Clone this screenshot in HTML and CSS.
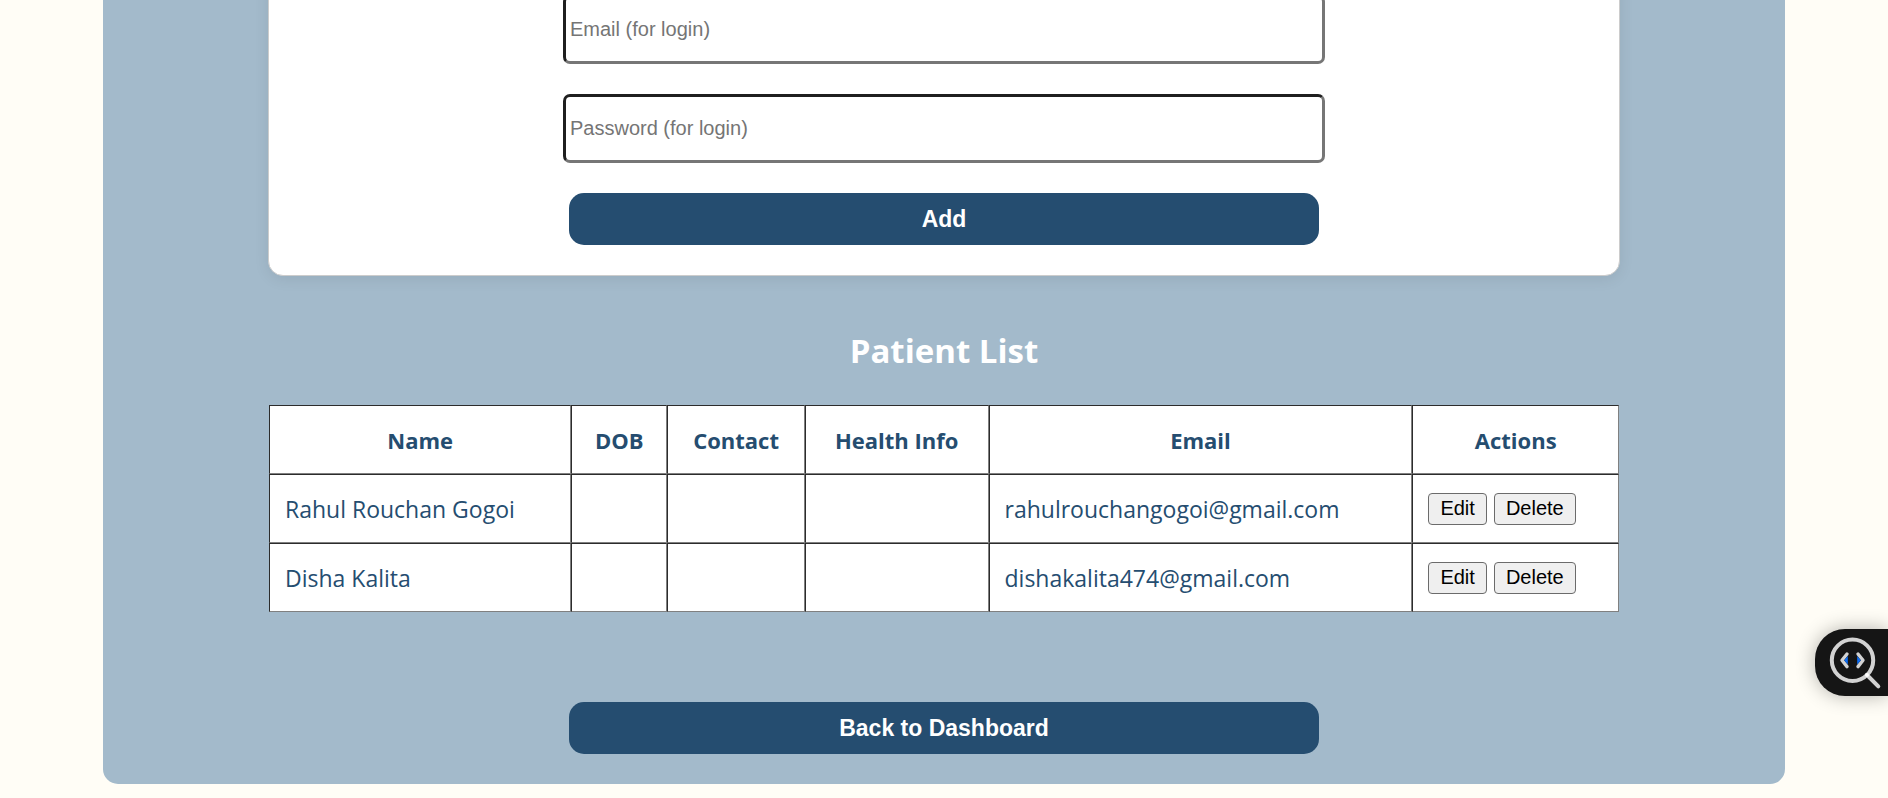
FILE: index.html
```html
<!DOCTYPE html>
<html lang="en">
<head>
<meta charset="utf-8">
<title>Patient List</title>
<link rel="stylesheet" href="styles.css">
</head>
<body>
<main class="panel">
  <form class="card">
    <input class="field" type="email" placeholder="Email (for login)" aria-label="Email (for login)">
    <input class="field" type="password" placeholder="Password (for login)" aria-label="Password (for login)">
    <button class="primary" type="button">Add</button>
  </form>
  <h2 class="title">Patient List</h2>
  <div class="table-wrap">
    <table class="patients">
      <colgroup>
        <col class="col-name"><col class="col-dob"><col class="col-contact"><col class="col-health"><col class="col-email"><col class="col-actions">
      </colgroup>
      <thead>
        <tr><th>Name</th><th>DOB</th><th>Contact</th><th>Health Info</th><th>Email</th><th>Actions</th></tr>
      </thead>
      <tbody>
        <tr>
          <td>Rahul Rouchan Gogoi</td><td></td><td></td><td></td><td>rahulrouchangogoi@gmail.com</td>
          <td><div class="actions"><button class="small" type="button">Edit</button><button class="small" type="button">Delete</button></div></td>
        </tr>
        <tr>
          <td>Disha Kalita</td><td></td><td></td><td></td><td>dishakalita474@gmail.com</td>
          <td><div class="actions"><button class="small" type="button">Edit</button><button class="small" type="button">Delete</button></div></td>
        </tr>
      </tbody>
    </table>
  </div>
  <button class="primary back" type="button">Back to Dashboard</button>
</main>
<button class="inspector" type="button" aria-label="Inspect code">
  <svg class="inspector-icon" viewBox="0 0 73 67" aria-hidden="true">
    <g fill="none" stroke="#d2d2d2" stroke-width="4" stroke-linecap="round" stroke-linejoin="round">
      <circle cx="37.500" cy="31.200" r="20.700"/>
      <path d="M32 25l-5 6.300 5 6.300 M43 25l5 6.300-5 6.300" stroke-width="3.400"/>
      <path d="M52 46L63.300 57.300"/>
    </g>
    <path d="M32.800 27v8.600l-3.600-4.300z M42.200 27v8.600l3.600-4.300z" fill="#0b6cf5"/>
    <circle cx="52" cy="46" r="2" fill="#fff"/>
  </svg>
</button>
</body>
</html>
```

FILE: styles.css
```css
* { box-sizing: border-box; }

html { overflow: hidden; }

body {
  margin: 0;
  background: #fffdf6;
  color: #254d70;
  font-family: "Segoe UI", "Open Sans", "Noto Sans", sans-serif;
  font-size: 23px;
  line-height: 32px;
}

.panel {
  display: flex;
  flex-direction: column;
  align-items: center;
  margin: -36px 103px 0;
  padding: 0 165px 30px;
  background: #a3bacb;
  border-radius: 0 0 15px 15px;
}

.card {
  display: flex;
  flex-direction: column;
  align-items: center;
  gap: 30px;
  width: 100%;
  padding: 30px;
  background: #fff;
  border: 1px solid #ccc;
  border-radius: 15px;
  box-shadow: 0 3px 15px rgba(0, 0, 0, 0.08);
}

.field {
  width: 100%;
  max-width: 762px;
  height: 69px;
  padding: 1px 4px;
  border: 3px solid;
  border-color: #1f1f1f #767676 #767676 #1f1f1f;
  border-radius: 7px;
  background: #fff;
  font: 20px "Liberation Sans", Arial, sans-serif;
}

.field::placeholder { color: #757575; }

.primary {
  width: 100%;
  max-width: 750px;
  height: 52px;
  padding: 0 15px;
  border: 0;
  border-radius: 15px;
  background: #254d70;
  color: #fff;
  font: bold 23px "Liberation Sans", Arial, sans-serif;
}

.title {
  margin: 51px 0 30px;
  color: #fff;
  font-size: 33px;
  line-height: 48px;
}

.table-wrap { width: 100%; padding: 0 1px; }

.patients {
  width: 100%;
  table-layout: fixed;
  border-collapse: separate;
  border-spacing: 0;
  background: #fff;
}

.patients th { font-size: 22px; }

.col-name { width: 22.4%; }
.col-dob { width: 7.1%; }
.col-contact { width: 10.2%; }
.col-health { width: 13.6%; }
.col-email { width: 31.4%; }
.col-actions { width: 15.3%; }

.patients th,
.patients td {
  height: 69px;
  padding: 15px;
  border: 1px solid;
  border-color: #2c2c2c #808080 #808080 #2c2c2c;
}

.actions { display: flex; gap: 7px; }

.small {
  height: 32px;
  padding: 0 11px;
  border: 1px solid #6b6b6b;
  border-radius: 4px;
  background: #efefef;
  color: #000;
  font: 20px "Liberation Sans", Arial, sans-serif;
}

.back { margin-top: 90px; }

.inspector {
  position: fixed;
  right: 0;
  top: 629px;
  width: 73px;
  height: 67px;
  padding: 0;
  border: 0;
  border-radius: 30px 0 0 30px;
  background: #151515;
  box-shadow: 0 0 19px rgba(0, 0, 0, 0.3);
}

.inspector-icon { display: block; width: 100%; height: 100%; }
```
